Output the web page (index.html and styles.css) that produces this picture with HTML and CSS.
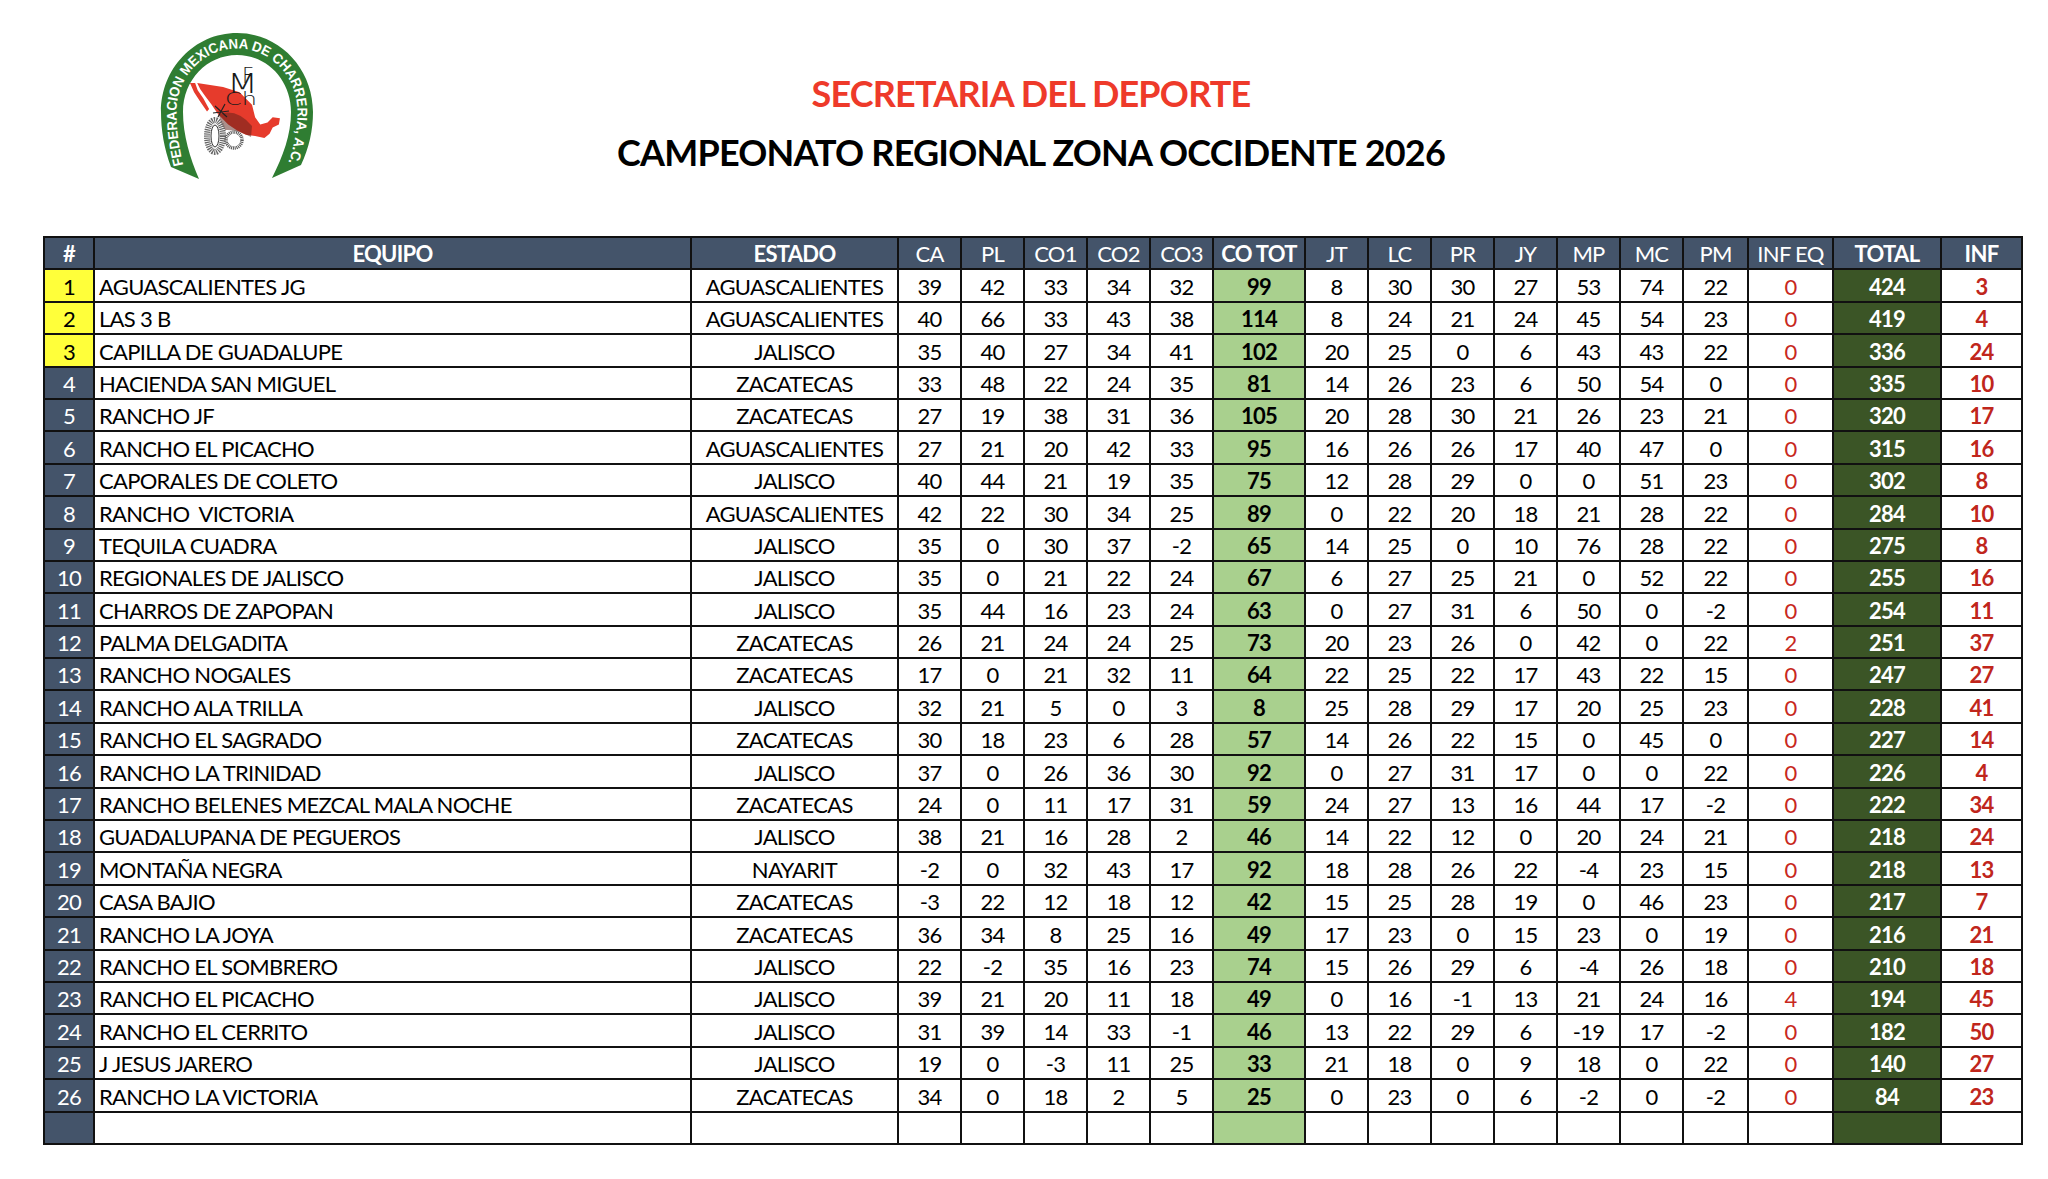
FILE: index.html
```html
<!DOCTYPE html>
<html lang="es">
<head>
<meta charset="utf-8">
<title>Campeonato Regional Zona Occidente 2026</title>
<link rel="stylesheet" href="styles.css">
</head>
<body>
<div class="page">
  <header class="top">
    <svg class="logo" viewBox="0 0 160 152" width="160" height="152" aria-label="Federación Mexicana de Charrería">
      <defs>
        <path id="arcText" d="M 29 138 C 24 118, 21.5 100, 21.5 82 C 21.5 46, 49 18.5, 82 18.5 C 115 18.5, 142.5 46, 142.5 82 C 142.5 100, 139 118, 132 136"/>
      </defs>
      <path class="shoe" d="M 16 137 C 9 118, 6 100, 6 82 C 6 39, 39 3, 82 3 C 125 3, 158 39, 158 82 C 158 100, 154 118, 146 135 L 117 148 C 128 126, 136 105, 136 82 C 136 50, 112 25, 82 25 C 52 25, 28 50, 28 82 C 28 105, 35 128, 44 149 Z"/>
      <text class="shoe-text"><textPath href="#arcText" startOffset="3" textLength="300" lengthAdjust="spacingAndGlyphs">FEDERACION MEXICANA DE CHARRERIA, A.C.</textPath></text>
      <g transform="matrix(1.034 0 0 1.038 -6.4 -6.2)">
        <path class="map" d="M 47 57 L 72 61 L 88 66 L 100 78 L 103 90 L 108 97 L 115 95 L 120 90 L 127 91 L 126 97 L 120 100 L 117 106 L 112 110 L 103 108 L 94 107 L 86 103 L 77 97 L 67 87 L 61 78 L 55 70 L 50 63 Z M 40 57 L 45 57 L 47.5 64 L 53 72 L 58.5 82 L 56.5 84.5 L 50 75 L 44 66 Z"/>
      </g>
      <path class="shade" d="M 64 84 Q 82 78 97 96 L 96 107 Q 82 99 70 100 Q 65 93 64 84 Z"/>
      <text class="mono"><tspan class="mf" x="87" y="53">F</tspan><tspan x="72" y="63" textLength="31" lengthAdjust="spacingAndGlyphs">M</tspan><tspan class="mch" x="70" y="75" textLength="32" lengthAdjust="spacingAndGlyphs">Ch</tspan></text>
      <ellipse class="coil" cx="60" cy="106" rx="8" ry="16"/>
      <ellipse class="coil-in" cx="60" cy="106" rx="4" ry="11"/>
      <ellipse class="stirrup" cx="79" cy="110" rx="8" ry="8"/>
      <path class="spur" d="M 60 76 L 72 87 M 70 74 L 63 87 M 58 83 L 74 81"/>
    </svg>
    <div class="titles">
      <h1 class="t1">SECRETARIA DEL DEPORTE</h1>
      <h2 class="t2">CAMPEONATO REGIONAL ZONA OCCIDENTE 2026</h2>
    </div>
  </header>

  <table class="standings">
    <colgroup>
      <col class="c-rk"><col class="c-eq"><col class="c-st">
      <col class="c-n"><col class="c-n"><col class="c-n"><col class="c-n"><col class="c-n">
      <col class="c-co">
      <col class="c-n"><col class="c-n"><col class="c-n"><col class="c-n"><col class="c-n"><col class="c-n"><col class="c-pm">
      <col class="c-ie"><col class="c-tt"><col class="c-inf">
    </colgroup>
    <thead>
      <tr>
        <th class="b">#</th><th class="b">EQUIPO</th><th class="b">ESTADO</th>
        <th>CA</th><th>PL</th><th>CO1</th><th>CO2</th><th>CO3</th>
        <th class="b">CO TOT</th>
        <th>JT</th><th>LC</th><th>PR</th><th>JY</th><th>MP</th><th>MC</th><th>PM</th>
        <th>INF EQ</th><th class="b">TOTAL</th><th class="b">INF</th>
      </tr>
    </thead>
    <tbody>
      <tr class="podium"><td>1</td><td>AGUASCALIENTES JG</td><td>AGUASCALIENTES</td><td>39</td><td>42</td><td>33</td><td>34</td><td>32</td><td>99</td><td>8</td><td>30</td><td>30</td><td>27</td><td>53</td><td>74</td><td>22</td><td>0</td><td>424</td><td>3</td></tr>
      <tr class="podium"><td>2</td><td>LAS 3 B</td><td>AGUASCALIENTES</td><td>40</td><td>66</td><td>33</td><td>43</td><td>38</td><td>114</td><td>8</td><td>24</td><td>21</td><td>24</td><td>45</td><td>54</td><td>23</td><td>0</td><td>419</td><td>4</td></tr>
      <tr class="podium"><td>3</td><td>CAPILLA DE GUADALUPE</td><td>JALISCO</td><td>35</td><td>40</td><td>27</td><td>34</td><td>41</td><td>102</td><td>20</td><td>25</td><td>0</td><td>6</td><td>43</td><td>43</td><td>22</td><td>0</td><td>336</td><td>24</td></tr>
      <tr><td>4</td><td>HACIENDA SAN MIGUEL</td><td>ZACATECAS</td><td>33</td><td>48</td><td>22</td><td>24</td><td>35</td><td>81</td><td>14</td><td>26</td><td>23</td><td>6</td><td>50</td><td>54</td><td>0</td><td>0</td><td>335</td><td>10</td></tr>
      <tr><td>5</td><td>RANCHO JF</td><td>ZACATECAS</td><td>27</td><td>19</td><td>38</td><td>31</td><td>36</td><td>105</td><td>20</td><td>28</td><td>30</td><td>21</td><td>26</td><td>23</td><td>21</td><td>0</td><td>320</td><td>17</td></tr>
      <tr><td>6</td><td>RANCHO EL PICACHO</td><td>AGUASCALIENTES</td><td>27</td><td>21</td><td>20</td><td>42</td><td>33</td><td>95</td><td>16</td><td>26</td><td>26</td><td>17</td><td>40</td><td>47</td><td>0</td><td>0</td><td>315</td><td>16</td></tr>
      <tr><td>7</td><td>CAPORALES DE COLETO</td><td>JALISCO</td><td>40</td><td>44</td><td>21</td><td>19</td><td>35</td><td>75</td><td>12</td><td>28</td><td>29</td><td>0</td><td>0</td><td>51</td><td>23</td><td>0</td><td>302</td><td>8</td></tr>
      <tr><td>8</td><td>RANCHO&nbsp; VICTORIA</td><td>AGUASCALIENTES</td><td>42</td><td>22</td><td>30</td><td>34</td><td>25</td><td>89</td><td>0</td><td>22</td><td>20</td><td>18</td><td>21</td><td>28</td><td>22</td><td>0</td><td>284</td><td>10</td></tr>
      <tr><td>9</td><td>TEQUILA CUADRA</td><td>JALISCO</td><td>35</td><td>0</td><td>30</td><td>37</td><td>-2</td><td>65</td><td>14</td><td>25</td><td>0</td><td>10</td><td>76</td><td>28</td><td>22</td><td>0</td><td>275</td><td>8</td></tr>
      <tr><td>10</td><td>REGIONALES DE JALISCO</td><td>JALISCO</td><td>35</td><td>0</td><td>21</td><td>22</td><td>24</td><td>67</td><td>6</td><td>27</td><td>25</td><td>21</td><td>0</td><td>52</td><td>22</td><td>0</td><td>255</td><td>16</td></tr>
      <tr><td>11</td><td>CHARROS DE ZAPOPAN</td><td>JALISCO</td><td>35</td><td>44</td><td>16</td><td>23</td><td>24</td><td>63</td><td>0</td><td>27</td><td>31</td><td>6</td><td>50</td><td>0</td><td>-2</td><td>0</td><td>254</td><td>11</td></tr>
      <tr><td>12</td><td>PALMA DELGADITA</td><td>ZACATECAS</td><td>26</td><td>21</td><td>24</td><td>24</td><td>25</td><td>73</td><td>20</td><td>23</td><td>26</td><td>0</td><td>42</td><td>0</td><td>22</td><td>2</td><td>251</td><td>37</td></tr>
      <tr><td>13</td><td>RANCHO NOGALES</td><td>ZACATECAS</td><td>17</td><td>0</td><td>21</td><td>32</td><td>11</td><td>64</td><td>22</td><td>25</td><td>22</td><td>17</td><td>43</td><td>22</td><td>15</td><td>0</td><td>247</td><td>27</td></tr>
      <tr><td>14</td><td>RANCHO ALA TRILLA</td><td>JALISCO</td><td>32</td><td>21</td><td>5</td><td>0</td><td>3</td><td>8</td><td>25</td><td>28</td><td>29</td><td>17</td><td>20</td><td>25</td><td>23</td><td>0</td><td>228</td><td>41</td></tr>
      <tr><td>15</td><td>RANCHO EL SAGRADO</td><td>ZACATECAS</td><td>30</td><td>18</td><td>23</td><td>6</td><td>28</td><td>57</td><td>14</td><td>26</td><td>22</td><td>15</td><td>0</td><td>45</td><td>0</td><td>0</td><td>227</td><td>14</td></tr>
      <tr><td>16</td><td>RANCHO LA TRINIDAD</td><td>JALISCO</td><td>37</td><td>0</td><td>26</td><td>36</td><td>30</td><td>92</td><td>0</td><td>27</td><td>31</td><td>17</td><td>0</td><td>0</td><td>22</td><td>0</td><td>226</td><td>4</td></tr>
      <tr><td>17</td><td>RANCHO BELENES MEZCAL MALA NOCHE</td><td>ZACATECAS</td><td>24</td><td>0</td><td>11</td><td>17</td><td>31</td><td>59</td><td>24</td><td>27</td><td>13</td><td>16</td><td>44</td><td>17</td><td>-2</td><td>0</td><td>222</td><td>34</td></tr>
      <tr><td>18</td><td>GUADALUPANA DE PEGUEROS</td><td>JALISCO</td><td>38</td><td>21</td><td>16</td><td>28</td><td>2</td><td>46</td><td>14</td><td>22</td><td>12</td><td>0</td><td>20</td><td>24</td><td>21</td><td>0</td><td>218</td><td>24</td></tr>
      <tr><td>19</td><td>MONTAÑA NEGRA</td><td>NAYARIT</td><td>-2</td><td>0</td><td>32</td><td>43</td><td>17</td><td>92</td><td>18</td><td>28</td><td>26</td><td>22</td><td>-4</td><td>23</td><td>15</td><td>0</td><td>218</td><td>13</td></tr>
      <tr><td>20</td><td>CASA BAJIO</td><td>ZACATECAS</td><td>-3</td><td>22</td><td>12</td><td>18</td><td>12</td><td>42</td><td>15</td><td>25</td><td>28</td><td>19</td><td>0</td><td>46</td><td>23</td><td>0</td><td>217</td><td>7</td></tr>
      <tr><td>21</td><td>RANCHO LA JOYA</td><td>ZACATECAS</td><td>36</td><td>34</td><td>8</td><td>25</td><td>16</td><td>49</td><td>17</td><td>23</td><td>0</td><td>15</td><td>23</td><td>0</td><td>19</td><td>0</td><td>216</td><td>21</td></tr>
      <tr><td>22</td><td>RANCHO EL SOMBRERO</td><td>JALISCO</td><td>22</td><td>-2</td><td>35</td><td>16</td><td>23</td><td>74</td><td>15</td><td>26</td><td>29</td><td>6</td><td>-4</td><td>26</td><td>18</td><td>0</td><td>210</td><td>18</td></tr>
      <tr><td>23</td><td>RANCHO EL PICACHO</td><td>JALISCO</td><td>39</td><td>21</td><td>20</td><td>11</td><td>18</td><td>49</td><td>0</td><td>16</td><td>-1</td><td>13</td><td>21</td><td>24</td><td>16</td><td>4</td><td>194</td><td>45</td></tr>
      <tr><td>24</td><td>RANCHO EL CERRITO</td><td>JALISCO</td><td>31</td><td>39</td><td>14</td><td>33</td><td>-1</td><td>46</td><td>13</td><td>22</td><td>29</td><td>6</td><td>-19</td><td>17</td><td>-2</td><td>0</td><td>182</td><td>50</td></tr>
      <tr><td>25</td><td>J JESUS JARERO</td><td>JALISCO</td><td>19</td><td>0</td><td>-3</td><td>11</td><td>25</td><td>33</td><td>21</td><td>18</td><td>0</td><td>9</td><td>18</td><td>0</td><td>22</td><td>0</td><td>140</td><td>27</td></tr>
      <tr><td>26</td><td>RANCHO LA VICTORIA</td><td>ZACATECAS</td><td>34</td><td>0</td><td>18</td><td>2</td><td>5</td><td>25</td><td>0</td><td>23</td><td>0</td><td>6</td><td>-2</td><td>0</td><td>-2</td><td>0</td><td>84</td><td>23</td></tr>
      <tr><td></td><td></td><td></td><td></td><td></td><td></td><td></td><td></td><td></td><td></td><td></td><td></td><td></td><td></td><td></td><td></td><td></td><td></td><td></td></tr>
    </tbody>
  </table>
</div>
</body>
</html>
```

FILE: styles.css
```css
html, body {
  margin: 0;
  padding: 0;
  background: #ffffff;
}

body {
  font-family: Lato, "Open Sans", "Liberation Sans", sans-serif;
  color: #000;
}

.page {
  width: 2048px;
  padding-left: 43px;
  box-sizing: border-box;
}

/* ---------- header ---------- */
.top {
  display: grid;
  height: 236px;
  width: 1976px;
}

.logo,
.titles {
  grid-area: 1 / 1;
}

.logo {
  justify-self: start;
  margin: 30px 0 0 112px;
  display: block;
}

.shoe { fill: #2f7d32; }
.shoe-text {
  font-family: "Liberation Sans", Arial, sans-serif;
  font-weight: 700;
  font-size: 14px;
  fill: #ffffff;
}
.map { fill: #e63b2c; }
.shade { fill: #5a1f18; opacity: 0.5; }
.mono {
  font-family: "DejaVu Sans", sans-serif;
  font-weight: 200;
  font-size: 27px;
  fill: #1a1a1a;
}
.mono .mf { font-size: 21px; }
.mono .mch { font-size: 18px; }
.coil {
  fill: none;
  stroke: #666666;
  stroke-width: 6;
  stroke-dasharray: 1.2 0.9;
}
.coil-in {
  fill: none;
  stroke: #333333;
  stroke-width: 1;
}
.stirrup {
  fill: none;
  stroke: #555555;
  stroke-width: 3.5;
  stroke-dasharray: 1 0.8;
}
.spur {
  fill: none;
  stroke: #222;
  stroke-width: 1.2;
}

.titles {
  justify-self: center;
  text-align: center;
}

.t1, .t2 {
  margin: 0;
  font-weight: 700;
  font-size: 36px;
  line-height: 36px;
  letter-spacing: -0.8px;
  white-space: nowrap;
}

.t1 {
  margin-top: 75px;
  color: #ee3a2a;
}

.t2 {
  margin-top: 23px;
  color: #000;
}

/* ---------- table ---------- */
.standings {
  width: 1976px;
  table-layout: fixed;
  border-collapse: collapse;
  border: 2px solid #111;
  font-size: 22px;
  line-height: 22px;
  letter-spacing: -0.7px;
}

.c-rk { width: 50px; }
.c-eq { width: 597px; }
.c-st { width: 207px; }
.c-n  { width: 63px; }
.c-co { width: 92px; }
.c-pm { width: 65px; }
.c-ie { width: 85px; }
.c-tt { width: 108px; }
.c-inf { width: 81px; }

.standings tr {
  height: 32.4px;
}

.standings th,
.standings td {
  border: 2px solid #111;
  padding: 0 3px 3px;
  text-align: center;
  vertical-align: bottom;
  white-space: nowrap;
  overflow: hidden;
}

.standings th {
  background: #44546a;
  color: #ffffff;
  font-weight: 400;
}

.standings th.b {
  font-weight: 700;
}

/* rank column */
.standings td:nth-child(1) {
  background: #44546a;
  color: #ffffff;
}
.standings tr.podium td:nth-child(1) {
  background: #ffff3a;
  color: #000;
}

/* team name */
.standings td:nth-child(2) {
  text-align: left;
  padding-left: 4px;
}

/* CO TOT */
.standings td:nth-child(9) {
  background: #a9d08e;
  font-weight: 700;
}

/* INF EQ */
.standings td:nth-child(17) {
  color: #c8281e;
}

/* TOTAL */
.standings td:nth-child(18) {
  background: #3b5526;
  color: #ffffff;
  font-weight: 700;
}

/* INF */
.standings td:nth-child(19) {
  color: #c0261c;
  font-weight: 700;
}
```
